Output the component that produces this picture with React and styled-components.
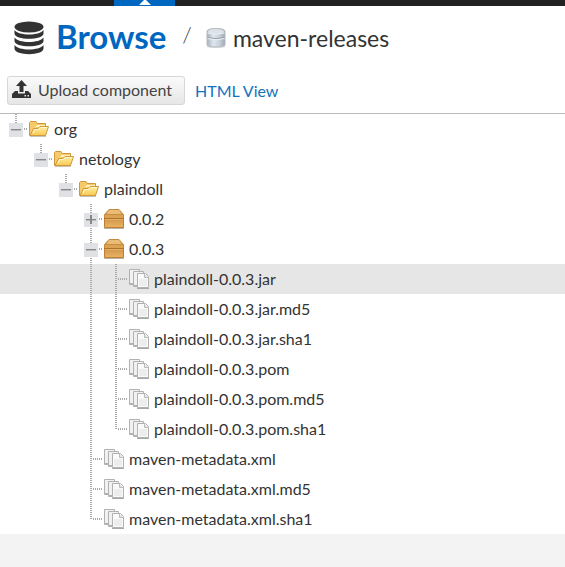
import React from "react";
import styled, { createGlobalStyle } from "styled-components";

const GlobalStyle = createGlobalStyle`
  * { box-sizing: border-box; }
  body {
    margin: 0;
    background: #f3f3f3;
    color: #333;
    font-family: Lato, "Open Sans", sans-serif;
    font-size: 16px;
  }
  svg { display: block; flex: none; }
`;

const TopBar = styled.div`
  height: 6px;
  padding-left: 114px;
  background: #222;
`;

const ActiveTab = styled.div`
  display: flex;
  justify-content: center;
  width: 61px;
  height: 6px;
  background: #0067c0;
`;

const Panel = styled.main`
  background: #fff;
`;

const Header = styled.header`
  display: flex;
  align-items: center;
  height: 64px;
  padding-left: 13px;
`;

const Title = styled.h1`
  margin: 0 0 4px 11px;
  color: #0067c0;
  font-size: 33px;
  line-height: 40px;
  font-weight: 700;
`;

const Slash = styled.span`
  margin: 0 14px 6px 16px;
  font-size: 22px;
  line-height: 24px;
  font-weight: 300;
`;

const RepoName = styled.h2`
  margin: 0 0 0 7px;
  font-size: 23px;
  line-height: 28px;
  font-weight: 400;
`;

const Toolbar = styled.div`
  display: flex;
  align-items: center;
  gap: 10px;
  height: 44px;
  padding: 0 7px 3px;
  border-bottom: 1px solid #bbb;
`;

const UploadButton = styled.button`
  display: flex;
  align-items: center;
  gap: 7px;
  height: 29px;
  padding: 0 12px 2px 4px;
  border: 1px solid #d6d6d6;
  border-radius: 3px;
  background: linear-gradient(#fafafa, #e6e6e6);
  color: #444;
  font: inherit;
`;

const ViewLink = styled.a`
  color: #1472bd;
  text-decoration: none;
`;

const Tree = styled.ul`
  margin: 0;
  padding: 0;
  list-style: none;
`;

const Row = styled.li`
  display: flex;
  align-items: center;
  height: 30px;
  padding-left: 4px;
  background: ${(p) => (p.$selected ? "#e6e6e6" : "#fff")};
`;

const Label = styled.span`
  margin-left: 5px;
  line-height: 20px;
  white-space: nowrap;
`;

const Toggle = styled.button`
  width: 25px;
  height: 30px;
  padding: 0;
  border: 0;
  background: none;
`;

const Indent = styled.span`
  width: 25px;
  height: 30px;
`;

function Guide({ up, down, branch, sign }) {
  return (
    <svg width="25" height="30" viewBox="0 0 25 30" aria-hidden="true">
      <g stroke="#999" strokeDasharray="1 1" fill="none">
        {up && <path strokeWidth="2" stroke="#aaa" d="M12 0V16" />}
        {down && <path strokeWidth="2" stroke="#aaa" d="M12 16V30" />}
        {branch && <path strokeWidth="2" stroke="#aaa" d="M14 15H23" />}
      </g>
      {sign && <path fill="#dfe1e5" d="M5 9h14v14H5z" />}
      {sign && <path stroke="#888" d="M7 15.500h10" />}
      {sign && <path stroke="#bbb" d="M7 16.500h10" />}
      {sign === "plus" && <path stroke="#888" strokeWidth="2" d="M12 11v9" />}
    </svg>
  );
}

function FolderIcon() {
  return (
    <svg width="20" height="20" viewBox="0 0 20 20" aria-hidden="true">
      <defs>
        <linearGradient id="folderFront" x1="0" y1="0" x2="0" y2="1">
          <stop offset="0" stopColor="#fff0a6" />
          <stop offset="1" stopColor="#f8c84f" />
        </linearGradient>
      </defs>
      <path fill="#c8c4bb" d="M1 17h16v1H1z" />
      <path fill="#f6ca69" stroke="#cf983c" d="M.5 16.500v-13l1-1H7l1 2h8.500v12z" />
      <path fill="#fff1b8" d="M8 6h8v2H7l-2 1z" />
      <path fill="url(#folderFront)" stroke="#d09a3c" d="M1 16.500 4.500 9.500H9l2-2h8.500l-3 9z" />
      <path fill="none" stroke="#fff6ce" d="m4 14 1.500-3.500h4l2-2H18" />
    </svg>
  );
}

function BoxIcon() {
  return (
    <svg width="20" height="20" viewBox="0 0 20 20" aria-hidden="true">
      <defs>
        <linearGradient id="boxFront" x1="0" y1="0" x2="0" y2="1">
          <stop offset="0" stopColor="#cf9547" />
          <stop offset="1" stopColor="#e9b462" />
        </linearGradient>
      </defs>
      <path fill="#b9b3a9" d="M0 19h20v1H0z" />
      <path fill="#dca254" stroke="#c8893c" d="M.5 10V5.500L5 .5h10l4.500 5V10z" />
      <path fill="#e9bd78" d="M5 1h10l2 4H3z" />
      <path stroke="#c98d3f" d="M1 5.500h18" />
      <path fill="url(#boxFront)" stroke="#bf7e33" d="M.5 9.500h19v9H.5z" />
      <path stroke="#b27127" d="M0 9.500h20" />
      <path stroke="#e2b06a" d="M1 10.500h18" />
    </svg>
  );
}

function FilesIcon() {
  return (
    <svg width="20" height="20" viewBox="0 0 20 20" aria-hidden="true">
      <path fill="#f1f1f1" stroke="#b0b2b1" d="M.5.500h10v15H.5z" />
      <path fill="#b0b2b1" d="M1 14h6v2H1z" />
      <path fill="#f1f1f1" stroke="#b0b2b1" d="M4.500 2.500h10v15h-10z" />
      <path fill="#b0b2b1" d="M5 16h4v2H5z" />
      <path fill="#fafafa" stroke="#b0b2b1" d="M8.500 4.500h8l3 3v11h-11z" />
      <path fill="#ededed" d="M10 10h8v7h-8z" />
      <path fill="#e2e3e3" stroke="#bbb" d="M15.500 5v3.500h4" />
      <path fill="#a8aaa9" d="M8 19h12v1H8z" />
    </svg>
  );
}

function DatabaseIcon() {
  return (
    <svg width="32" height="34" viewBox="0 0 32 34" fill="#333" aria-hidden="true">
      <ellipse cx="16" cy="6" rx="14.500" ry="5.500" />
      <path d="M1.500 9c4 6 25 6 29 0v3.500c0 7-29 7-29 0z" />
      <path d="M1.500 16.500c4 6 25 6 29 0V20c0 7-29 7-29 0z" />
      <path d="M1.500 24c4 6 25 6 29 0v3.500c0 7.500-29 7.500-29 0z" />
    </svg>
  );
}

function RepositoryIcon() {
  return (
    <svg width="20" height="20" viewBox="0 0 20 20" aria-hidden="true">
      <defs>
        <linearGradient id="repoSide">
          <stop offset="0" stopColor="#a7afb9" />
          <stop offset=".35" stopColor="#e0e6ec" />
          <stop offset=".7" stopColor="#c7d0d9" />
          <stop offset="1" stopColor="#9fa8b3" />
        </linearGradient>
      </defs>
      <path fill="#c9cbcd" d="M1 18q9 3 18 0v1q-9 2-18 0z" />
      <path fill="url(#repoSide)" stroke="#b3b9c0" d="M1 3.500Q1 .500 10 .500t9 3v13q0 2.500-9 2.500t-9-2.500z" />
      <ellipse cx="10" cy="3.500" rx="8" ry="2.300" fill="#dce2e8" />
      <path fill="none" stroke="#8f9aa7" d="M1.500 9.500q8.500 2.500 17 0" />
      <path fill="none" stroke="#eef3f7" d="M1.500 10.500q8.500 2.500 17 0M1.500 5q8.500 2.500 17 0" />
    </svg>
  );
}

function UploadIcon() {
  return (
    <svg width="19" height="18" viewBox="0 0 19 18" fill="#333" aria-hidden="true">
      <path d="M9.500 0 15 6h-3.500v6h-4V6H4z" />
      <path fillRule="evenodd" d="M3 11h3v2.500h7V11h3l3 3v4H0v-4zM12.500 15v1.500H14V15zM15.500 15v1.500H17V15z" />
    </svg>
  );
}

const icons = { folder: FolderIcon, box: BoxIcon, files: FilesIcon };

/* `lines` marks, for each ancestor level, whether its branch continues below. */
const noLines = [false, false, false];
const inVersion = [false, false, false, true];

const nodes = [
  { name: "org", icon: "folder", lines: [], sign: "minus", last: true },
  { name: "netology", icon: "folder", lines: [false], sign: "minus", last: true },
  { name: "plaindoll", icon: "folder", lines: [false, false], sign: "minus", last: true },
  { name: "0.0.2", icon: "box", lines: noLines, sign: "plus" },
  { name: "0.0.3", icon: "box", lines: noLines, sign: "minus" },
  { name: "plaindoll-0.0.3.jar", icon: "files", lines: inVersion, selected: true },
  { name: "plaindoll-0.0.3.jar.md5", icon: "files", lines: inVersion },
  { name: "plaindoll-0.0.3.jar.sha1", icon: "files", lines: inVersion },
  { name: "plaindoll-0.0.3.pom", icon: "files", lines: inVersion },
  { name: "plaindoll-0.0.3.pom.md5", icon: "files", lines: inVersion },
  { name: "plaindoll-0.0.3.pom.sha1", icon: "files", lines: inVersion, last: true },
  { name: "maven-metadata.xml", icon: "files", lines: noLines },
  { name: "maven-metadata.xml.md5", icon: "files", lines: noLines },
  { name: "maven-metadata.xml.sha1", icon: "files", lines: noLines, last: true },
];

function TreeRow({ node }) {
  const Icon = icons[node.icon];
  const guide = <Guide up down={!node.last} branch sign={node.sign} />;
  return (
    <Row
      role="treeitem"
      aria-level={node.lines.length + 1}
      aria-selected={!!node.selected}
      aria-expanded={node.sign ? node.sign === "minus" : undefined}
      $selected={node.selected}
    >
      {node.lines.map((on, i) => (
        <Indent key={i}>
          <Guide up={on} down={on} />
        </Indent>
      ))}
      {node.sign ? (
        <Toggle type="button" aria-label={`Toggle ${node.name}`}>{guide}</Toggle>
      ) : (
        <Indent>{guide}</Indent>
      )}
      <Icon />
      <Label>{node.name}</Label>
    </Row>
  );
}

export default function App() {
  return (
    <>
      <GlobalStyle />
      <TopBar>
        <ActiveTab>
          <svg width="12" height="5" viewBox="0 0 12 5" aria-hidden="true">
            <path fill="#fff" d="M5 0h2l5 5H0z" />
          </svg>
        </ActiveTab>
      </TopBar>
      <Panel>
        <Header>
          <DatabaseIcon />
          <Title>Browse</Title>
          <Slash>/</Slash>
          <RepositoryIcon />
          <RepoName>maven-releases</RepoName>
        </Header>
        <Toolbar>
          <UploadButton type="button">
            <UploadIcon />
            Upload component
          </UploadButton>
          <ViewLink href="#html">HTML View</ViewLink>
        </Toolbar>
        <Tree role="tree" aria-label="Repository contents">
          {nodes.map((node) => (
            <TreeRow key={node.name} node={node} />
          ))}
        </Tree>
      </Panel>
    </>
  );
}
